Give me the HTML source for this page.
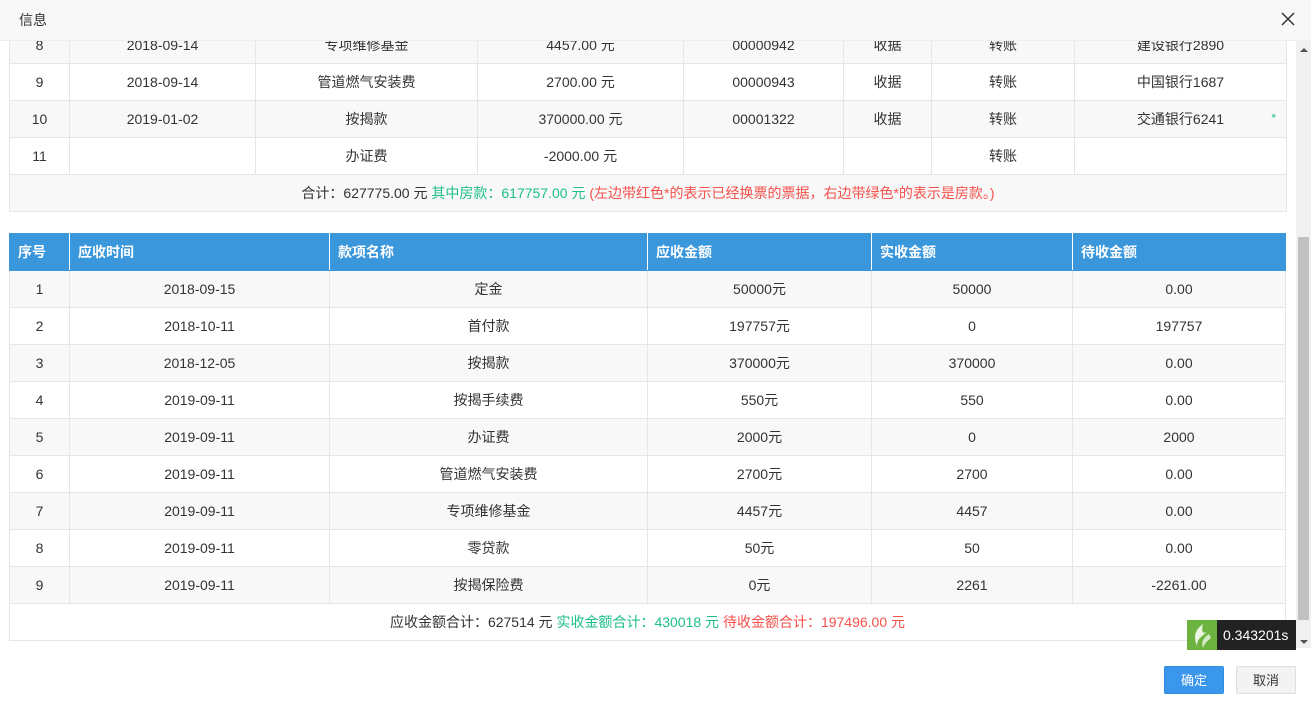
<!DOCTYPE html>
<html><head><meta charset="utf-8"><style>
*{margin:0;padding:0;box-sizing:border-box}
body{width:1311px;height:703px;background:#fff;font-family:"Liberation Sans","Noto Sans CJK SC",sans-serif;font-size:14px;color:#333;position:relative;overflow:hidden}
.hd{position:absolute;left:0;top:0;width:1311px;height:41px;background:#f8f8f8;border-bottom:1px solid #eee;line-height:40px;padding-left:19px;font-size:14px;color:#333}
.x{position:absolute;right:16px;top:12px;width:14px;height:14px}
.body{position:absolute;left:0;top:41px;width:1296px;height:607px;overflow:hidden}
.inner{position:absolute;left:0;top:-15px;width:1296px}
table{border-collapse:collapse;position:absolute;left:9px;table-layout:fixed}
td,th{border:1px solid #e6e6e6;height:37px;text-align:center;font-weight:normal;padding:0;white-space:nowrap}
tr.g td{background:#f8f8f8}
th{background:#3a97db;color:#fff;text-align:left;padding-left:8px;font-weight:bold;border-color:#3a97db;border-right-color:#fff}
.gr{color:#1dbf8a}.rd{color:#f5504a}
.sb{position:absolute;left:1296px;top:41px;width:15px;height:607px;background:#f0f0f0}
.th{position:absolute;left:1298px;top:237px;width:11px;height:383px;background:#c1c1c1}
.btn{position:absolute;top:666px;height:28px;width:60px;line-height:28px;text-align:center;font-size:13px;border-radius:2px}
</style></head><body>
<div class="hd">信息<svg class="x" viewBox="0 0 14 14"><path d="M1 1L13 13M13 1L1 13" stroke="#333" stroke-width="1.5"/></svg></div>
<div class="body"><div class="inner">
<table style="top:0;width:1277px">
<colgroup><col style="width:60px"><col style="width:186px"><col style="width:222px"><col style="width:206px"><col style="width:160px"><col style="width:88px"><col style="width:143px"><col style="width:212px"></colgroup>
<tr class="g"><td>8</td><td>2018-09-14</td><td>专项维修基金</td><td>4457.00 元</td><td>00000942</td><td>收据</td><td>转账</td><td>建设银行2890</td></tr>
<tr><td>9</td><td>2018-09-14</td><td>管道燃气安装费</td><td>2700.00 元</td><td>00000943</td><td>收据</td><td>转账</td><td>中国银行1687</td></tr>
<tr class="g"><td>10</td><td>2019-01-02</td><td>按揭款</td><td>370000.00 元</td><td>00001322</td><td>收据</td><td>转账</td><td style="position:relative">交通银行6241<span class="gr" style="position:absolute;right:10px;top:10px;font-size:12px">*</span></td></tr>
<tr><td>11</td><td></td><td>办证费</td><td>-2000.00 元</td><td></td><td></td><td>转账</td><td></td></tr>
<tr class="g"><td colspan="8">合计：627775.00 元 <span class="gr">其中房款：617757.00 元</span> <span class="rd">(左边带红色*的表示已经换票的票据，右边带绿色*的表示是房款。)</span></td></tr>
</table>
<table style="top:207px;width:1276px">
<colgroup><col style="width:60px"><col style="width:260px"><col style="width:318px"><col style="width:224px"><col style="width:201px"><col style="width:213px"></colgroup>
<tr><th>序号</th><th>应收时间</th><th>款项名称</th><th>应收金额</th><th>实收金额</th><th style="border-right-color:#3a97db">待收金额</th></tr>
<tr class="g"><td>1</td><td>2018-09-15</td><td>定金</td><td>50000元</td><td>50000</td><td>0.00</td></tr>
<tr><td>2</td><td>2018-10-11</td><td>首付款</td><td>197757元</td><td>0</td><td>197757</td></tr>
<tr class="g"><td>3</td><td>2018-12-05</td><td>按揭款</td><td>370000元</td><td>370000</td><td>0.00</td></tr>
<tr><td>4</td><td>2019-09-11</td><td>按揭手续费</td><td>550元</td><td>550</td><td>0.00</td></tr>
<tr class="g"><td>5</td><td>2019-09-11</td><td>办证费</td><td>2000元</td><td>0</td><td>2000</td></tr>
<tr><td>6</td><td>2019-09-11</td><td>管道燃气安装费</td><td>2700元</td><td>2700</td><td>0.00</td></tr>
<tr class="g"><td>7</td><td>2019-09-11</td><td>专项维修基金</td><td>4457元</td><td>4457</td><td>0.00</td></tr>
<tr><td>8</td><td>2019-09-11</td><td>零贷款</td><td>50元</td><td>50</td><td>0.00</td></tr>
<tr class="g"><td>9</td><td>2019-09-11</td><td>按揭保险费</td><td>0元</td><td>2261</td><td>-2261.00</td></tr>
<tr><td colspan="6">应收金额合计：627514 元 <span class="gr">实收金额合计：430018 元</span> <span class="rd">待收金额合计：197496.00 元</span></td></tr>
</table>
</div></div>
<div class="sb"></div><div class="th"></div>
<div style="position:absolute;left:1300px;top:48px;border:4px solid transparent;border-bottom-color:#555;border-top:0;width:0;height:0"></div>
<div style="position:absolute;left:1300px;top:640px;border:4px solid transparent;border-top-color:#555;border-bottom:0;width:0;height:0"></div>
<div style="position:absolute;left:1187px;top:620px;width:30px;height:30px;background:#6db33f"><svg viewBox="0 0 30 30" width="30" height="30"><path d="M16 4C8 10 6 16 10 26C10 18 16 16 20 12C16 14 14 12 16 4Z" fill="#fff" opacity=".85"/><path d="M22 14C16 18 14 22 16 28C18 22 22 20 24 18Z" fill="#fff" opacity=".7"/></svg></div>
<div style="position:absolute;left:1217px;top:620px;width:79px;height:30px;background:#222;color:#fff;font-size:14px;line-height:30px;padding-left:6px">0.343201s</div>
<div class="btn" style="left:1164px;background:#3a97eb;color:#fff;border:1px solid #2f8ce0">确定</div>
<div class="btn" style="left:1236px;background:#f3f3f3;color:#333;border:1px solid #dedede">取消</div>
</body></html>
